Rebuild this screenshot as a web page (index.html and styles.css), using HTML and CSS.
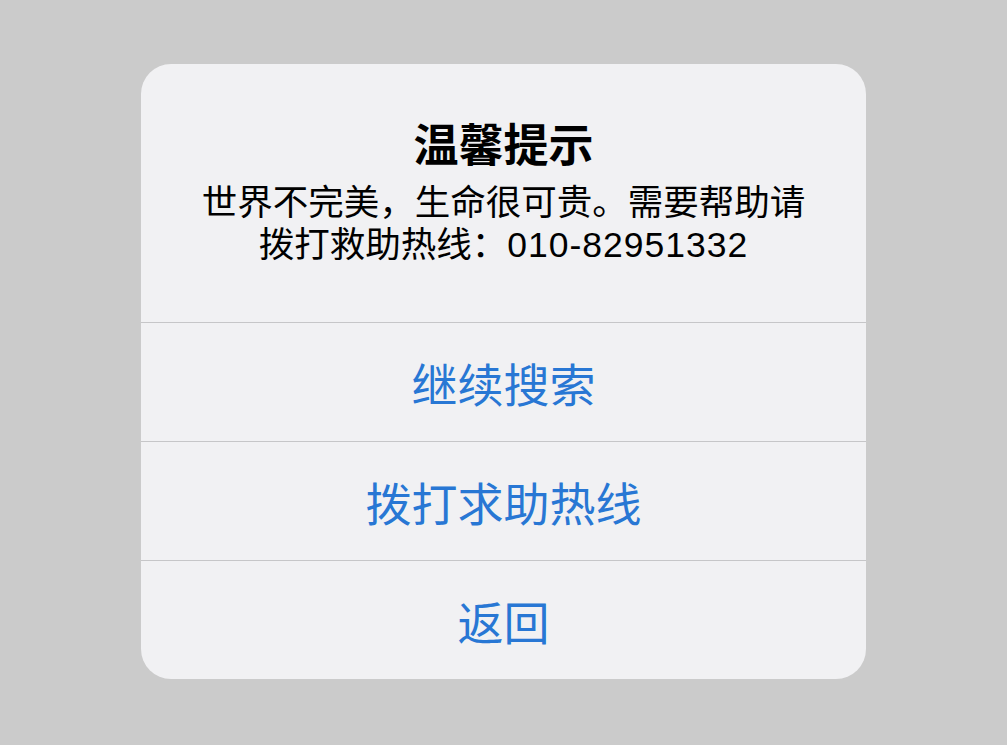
FILE: index.html
```html
<!DOCTYPE html>
<html lang="zh-CN">
<head>
<meta charset="utf-8">
<link rel="stylesheet" href="styles.css">
</head>
<body>
<div class="stage">
  <div class="dialog">
    <div class="header">
      <div class="title">温馨提示</div>
      <div class="message">世界不完美，生命很可贵。需要帮助请<br>拨打救助热线：<span class="num">010-82951332</span></div>
    </div>
    <div class="action">继续搜索</div>
    <div class="action">拨打求助热线</div>
    <div class="action">返回</div>
  </div>
</div>
</body>
</html>
```
FILE: styles.css
```css
html, body {
  margin: 0;
  padding: 0;
  background: #cbcbcb;
}
.stage {
  width: 1007px;
  height: 745px;
  display: flex;
  align-items: flex-start;
  justify-content: center;
  padding-top: 64px;
  box-sizing: border-box;
  font-family: "Noto Sans CJK SC", "Noto Sans", sans-serif;
}
.dialog {
  width: 725px;
  background: #f1f1f3;
  border-radius: 30px;
  overflow: hidden;
}
.header {
  height: 258px;
  box-sizing: border-box;
  padding-top: 52px;
  text-align: center;
  color: #000;
}
.title {
  font-size: 45px;
  font-weight: 700;
  line-height: 54px;
  margin-bottom: 12px;
}
.message {
  font-family: "Liberation Sans", "Noto Sans CJK SC", sans-serif;
  font-size: 35.5px;
  line-height: 42px;
}
.num {
  letter-spacing: 1px;
}
.action {
  height: 119px;
  border-top: 1.5px solid #c6c6c8;
  box-sizing: border-box;
  display: flex;
  align-items: center;
  justify-content: center;
  color: #2877d4;
  font-size: 46px;
  font-weight: 400;
}
```
